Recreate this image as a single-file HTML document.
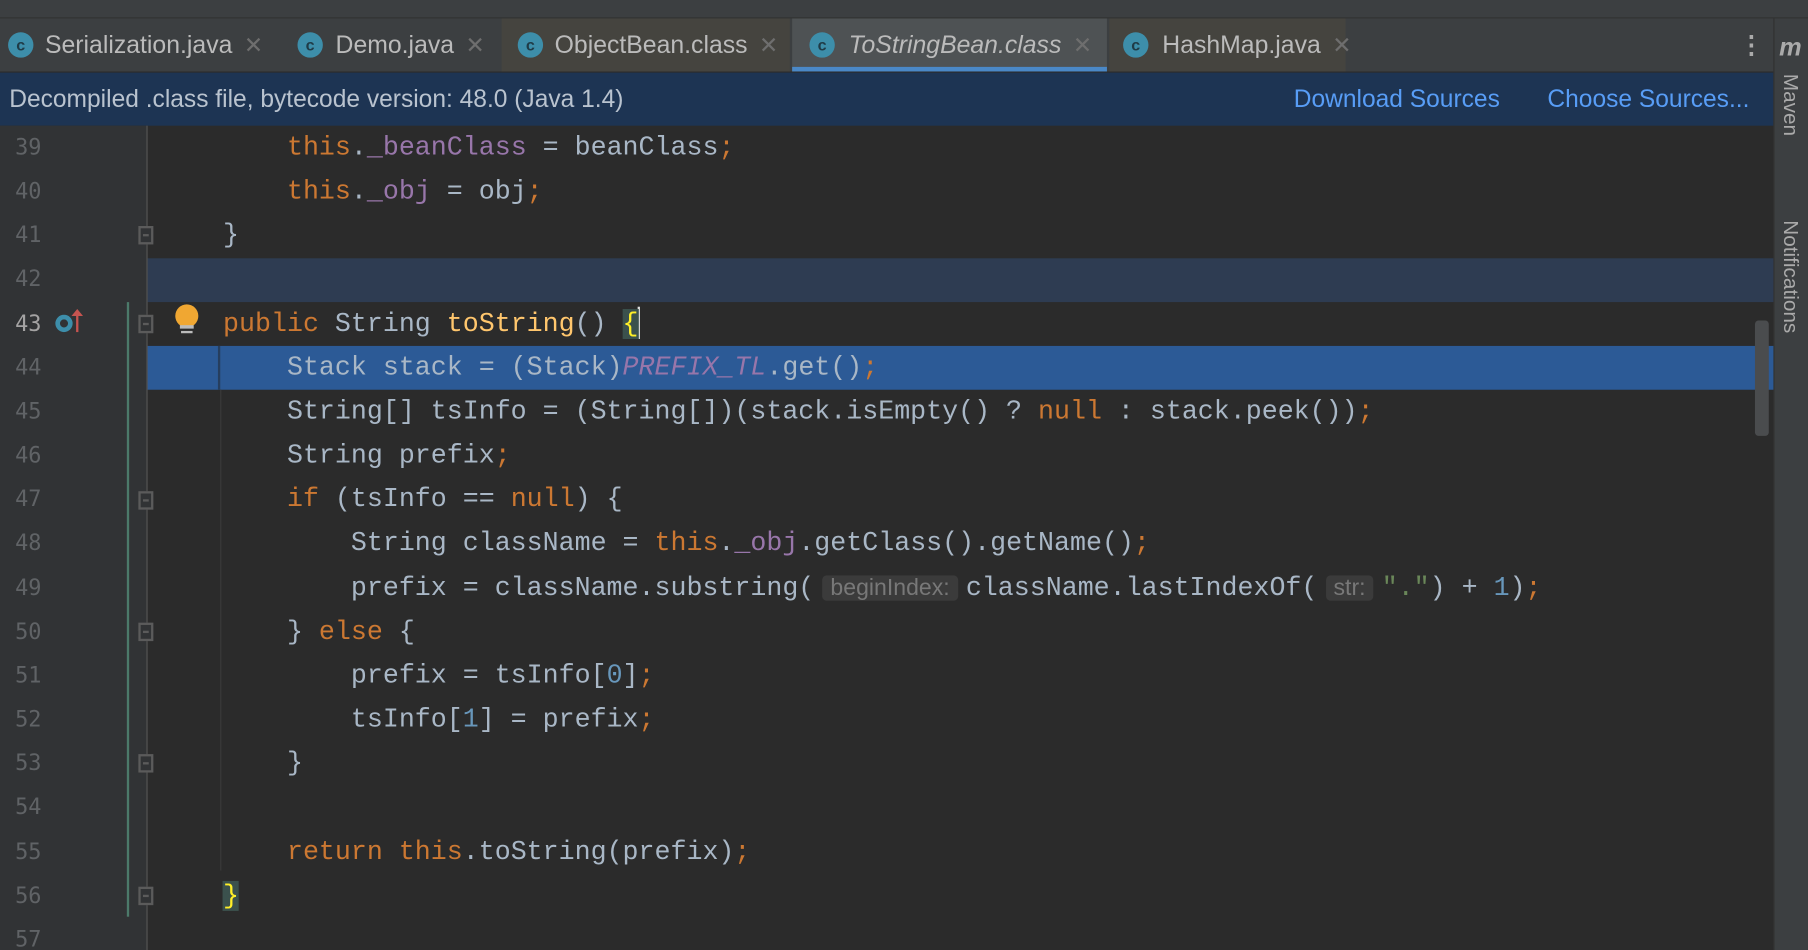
<!DOCTYPE html>
<html><head><meta charset="utf-8"><style>
html,body{margin:0;padding:0;background:#2b2b2b;overflow:hidden;width:1808px;height:950px}
#w{position:absolute;left:0;top:0;width:1568px;height:824px;overflow:hidden;transform:scale(1.15306);transform-origin:0 0;background:#2b2b2b;font-family:"Liberation Sans",sans-serif}
.abs{position:absolute}
.top{left:0;top:0;width:1568px;height:15px;background:#3c3f41;border-bottom:1px solid #323232}
.tabs{left:0;top:16px;width:1538px;height:46px;background:#3c3f41}
.tab{position:absolute;top:0;height:46px;color:#bbbbbb;font-size:21.5px;line-height:47px;white-space:nowrap}
.tab .c{position:absolute;top:12px;width:22px;height:22px;border-radius:50%;background:#3d8eaa;color:#1f3b47;font-size:14px;line-height:22px;text-align:center;font-weight:bold}
.tab .x{color:#6e6e6e;font-size:20px;margin-left:4px}
.banner{left:0;top:63px;width:1538px;height:46px;background:#1d3453;color:#b9c3cf;font-size:21.3px;line-height:47px}
.link{color:#589df6}
.side{left:1538px;top:16px;width:30px;height:808px;background:#3c3f41;border-left:1px solid #323232}
.gut{left:0;top:109px;width:128px;height:715px;background:#313335}
.ln{position:absolute;left:0;width:36px;text-align:right;color:#606366;font-family:"DejaVu Sans Mono",monospace;font-size:19px;line-height:38px}
.code{position:absolute;left:138px;top:109px;font-family:"Liberation Mono",monospace;font-size:23.1px;color:#a9b7c6;white-space:pre;line-height:38.17px}
.code div{height:38.17px}
.k{color:#cc7832}.f{color:#9876aa}.n{color:#6897bb}.s{color:#6a8759}.st{color:#9876aa;font-style:italic}
.h{background:#3b3b3b;color:#787878;font-family:"Liberation Sans",sans-serif;font-size:20px;border-radius:4px;padding:0 7px;margin:0 7px}
.fold{position:absolute;left:120px;width:13px;height:16px;box-sizing:border-box;border:2px solid #5b5b5b;background:#313335}
.fold:after{content:"";position:absolute;left:2px;top:5px;width:5px;height:2px;background:#5b5b5b}
</style></head><body><div id="w">
<div class="abs top"></div>
<div class="abs tabs">
 <div class="tab" style="left:0;width:245px"><span class="c" style="left:7px">c</span><span style="position:absolute;left:39px">Serialization.java <span class="x">✕</span></span></div>
 <div class="tab" style="left:248px;width:185px"><span class="c" style="left:10px">c</span><span style="position:absolute;left:43px">Demo.java <span class="x">✕</span></span></div>
 <div class="tab" style="left:435px;width:250px;background:#45443f"><span class="c" style="left:14px">c</span><span style="position:absolute;left:46px">ObjectBean.class <span class="x">✕</span></span></div>
 <div class="tab" style="left:687px;width:273px;background:#4e5254;border-bottom:4px solid #4a88c7;height:42px"><span class="c" style="left:15px">c</span><span style="position:absolute;left:49px;font-style:italic">ToStringBean.class <span class="x" style="font-style:normal">✕</span></span></div>
 <div class="tab" style="left:962px;width:205px;background:#45443f"><span class="c" style="left:12px">c</span><span style="position:absolute;left:46px">HashMap.java <span class="x">✕</span></span></div>
 <div class="tab" style="left:1508px;color:#aaa;font-weight:bold">⋮</div>
</div>
<div class="abs banner"><span style="position:absolute;left:8px">Decompiled .class file, bytecode version: 48.0 (Java 1.4)</span><span class="link" style="position:absolute;left:1122px">Download Sources</span><span class="link" style="position:absolute;left:1342px">Choose Sources...</span></div>
<div class="abs side"><div style="position:absolute;left:4px;top:12px;color:#aaa;font-style:italic;font-weight:bold;font-size:22px">m</div><div style="position:absolute;left:3px;top:48px;writing-mode:vertical-rl;color:#aaa;font-size:18px">Maven</div><div style="position:absolute;left:3px;top:175px;writing-mode:vertical-rl;color:#aaa;font-size:18px">Notifications</div></div>
<div class="abs gut"></div>
<div class="abs" style="left:128px;top:224px;width:1410px;height:38px;background:#2e3c52"></div>
<div class="abs" style="left:128px;top:300px;width:1410px;height:38px;background:#2c5a96"></div>
<div class="abs" style="left:189px;top:300px;width:2px;height:38px;background:#263e5e"></div>
<div class="abs" style="left:191px;top:338px;width:1px;height:417px;background:#3b3b3b"></div>
<div class="abs" style="left:127px;top:109px;width:1px;height:715px;background:#555"></div>
<div class="abs" style="left:110px;top:262px;width:2px;height:533px;background:#4c7a6a"></div>
<div class="fold" style="top:196px"></div><div class="fold" style="top:273px"></div><div class="fold" style="top:426px"></div><div class="fold" style="top:540px"></div><div class="fold" style="top:654px"></div><div class="fold" style="top:769px"></div>
<div class="abs" style="left:1522px;top:278px;width:12px;height:100px;background:#4a4c4e;border-radius:3px"></div>
<div class="abs" style="left:152px;top:264px;width:20px;height:20px;border-radius:50%;background:#f0a732"></div>
<div class="abs" style="left:156px;top:282px;width:12px;height:3px;background:#bbb"></div>
<div class="abs" style="left:157px;top:287px;width:10px;height:2px;background:#bbb"></div>
<div class="abs" style="left:48px;top:273px;border-radius:50%;border:4px solid #3d8eaa;box-sizing:border-box;width:15px;height:15px"></div>
<div class="abs" style="left:66px;top:270px;width:2px;height:18px;background:#c75450"></div>
<div class="abs" style="left:62px;top:268px;width:0;height:0;border-left:5px solid transparent;border-right:5px solid transparent;border-bottom:6px solid #c75450"></div>
<div class="abs" style="left:553px;top:266px;width:2px;height:28px;background:#ddd"></div>
<div class="code"><div>        <span class="k">this</span>.<span class="f">_beanClass</span> = beanClass<span class="k">;</span></div><div>        <span class="k">this</span>.<span class="f">_obj</span> = obj<span class="k">;</span></div><div>    }</div><div> </div><div>    <span class="k">public</span> String <span style="color:#ffc66d">toString</span>() <span style="color:#ffef28;background:#3b514d">{</span></div><div>        Stack stack = (Stack)<span class="st">PREFIX_TL</span>.get()<span class="k">;</span></div><div>        String[] tsInfo = (String[])(stack.isEmpty() ? <span class="k">null</span> : stack.peek())<span class="k">;</span></div><div>        String prefix<span class="k">;</span></div><div>        <span class="k">if</span> (tsInfo == <span class="k">null</span>) {</div><div>            String className = <span class="k">this</span>.<span class="f">_obj</span>.getClass().getName()<span class="k">;</span></div><div>            prefix = className.substring(<span class="h">beginIndex:</span>className.lastIndexOf(<span class="h">str:</span><span class="s">"."</span>) + <span class="n">1</span>)<span class="k">;</span></div><div>        } <span class="k">else</span> {</div><div>            prefix = tsInfo[<span class="n">0</span>]<span class="k">;</span></div><div>            tsInfo[<span class="n">1</span>] = prefix<span class="k">;</span></div><div>        }</div><div> </div><div>        <span class="k">return this</span>.toString(prefix)<span class="k">;</span></div><div>    <span style="color:#ffef28;background:#3b514d">}</span></div><div> </div></div>
<div style="position:absolute;left:0;top:109px">
<div class="ln" style="top:0px">39</div><div class="ln" style="top:38px">40</div><div class="ln" style="top:76px">41</div><div class="ln" style="top:114px">42</div><div class="ln" style="top:153px;color:#a4a3a3">43</div><div class="ln" style="top:191px">44</div><div class="ln" style="top:229px">45</div><div class="ln" style="top:267px">46</div><div class="ln" style="top:305px">47</div><div class="ln" style="top:343px">48</div><div class="ln" style="top:382px">49</div><div class="ln" style="top:420px">50</div><div class="ln" style="top:458px">51</div><div class="ln" style="top:496px">52</div><div class="ln" style="top:534px">53</div><div class="ln" style="top:572px">54</div><div class="ln" style="top:611px">55</div><div class="ln" style="top:649px">56</div><div class="ln" style="top:687px">57</div>
</div>
</div></body></html>
